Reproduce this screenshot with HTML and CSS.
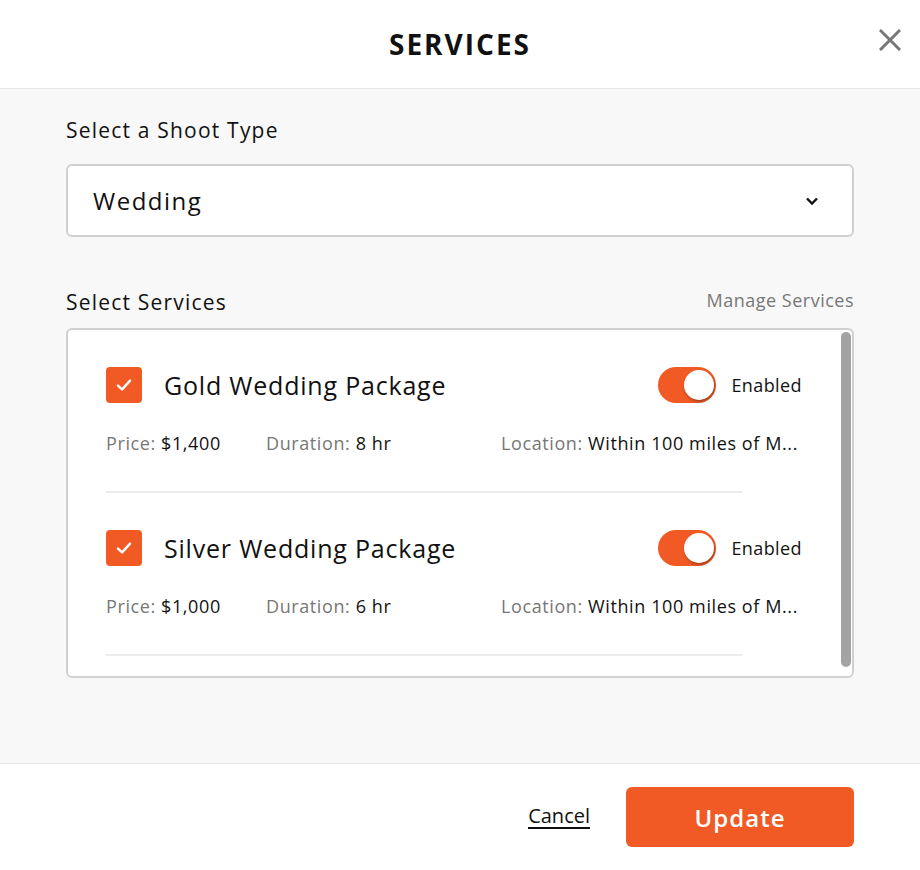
FILE: index.html
```html
<!DOCTYPE html>
<html lang="en">
<head>
    <meta charset="UTF-8">
    <meta name="viewport" content="width=device-width, initial-scale=1.0">
    <title>Services</title>
    <link rel="stylesheet" href="styles.css">
</head>
<body>
    <div class="modal">
        <div class="modal-header">
            <div class="modal-title">SERVICES</div>
            <button class="close" aria-label="Close">
                <svg width="22" height="22" viewBox="0 0 22 22"><path d="M2 2L20 20M20 2L2 20" stroke="#777" stroke-width="3" stroke-linecap="square"/></svg>
            </button>
        </div>

        <div class="modal-body">
            <div class="field-label">Select a Shoot Type</div>
            <div class="select-box">
                <span class="select-value">Wedding</span>
                <svg class="chevron" width="14" height="10" viewBox="0 0 14 10"><path d="M2 2.5L7 7.5L12 2.5" fill="none" stroke="#111" stroke-width="2.4"/></svg>
            </div>

            <div class="services-head">
                <div class="field-label">Select Services</div>
                <a class="manage-link">Manage Services</a>
            </div>
            <div class="services-list">
                <div class="scroll-thumb"></div>
                <!-- пакет 1 -->
                <div class="service">
                    <div class="service-row">
                        <div class="checkbox">
                            <svg width="22" height="22" viewBox="0 0 20 20"><path d="M4.5 10.5L8.3 14L15.5 6" fill="none" stroke="#fff" stroke-width="2.2" stroke-linecap="round" stroke-linejoin="round"/></svg>
                        </div>
                        <div class="service-name">Gold Wedding Package</div>
                        <div class="toggle"><div class="knob"></div></div>
                        <div class="toggle-label">Enabled</div>
                    </div>
                    <div class="service-info">
                        <span class="info-price"><span class="info-key">Price:</span> $1,400</span>
                        <span class="info-duration"><span class="info-key">Duration:</span> 8 hr</span>
                        <span class="info-location"><span class="info-key">Location:</span> Within 100 miles of M...</span>
                    </div>
                    <div class="divider"></div>
                </div>
                <!-- пакет 2 -->
                <div class="service">
                    <div class="service-row">
                        <div class="checkbox">
                            <svg width="22" height="22" viewBox="0 0 20 20"><path d="M4.5 10.5L8.3 14L15.5 6" fill="none" stroke="#fff" stroke-width="2.2" stroke-linecap="round" stroke-linejoin="round"/></svg>
                        </div>
                        <div class="service-name">Silver Wedding Package</div>
                        <div class="toggle"><div class="knob"></div></div>
                        <div class="toggle-label">Enabled</div>
                    </div>
                    <div class="service-info">
                        <span class="info-price"><span class="info-key">Price:</span> $1,000</span>
                        <span class="info-duration"><span class="info-key">Duration:</span> 6 hr</span>
                        <span class="info-location"><span class="info-key">Location:</span> Within 100 miles of M...</span>
                    </div>
                    <div class="divider"></div>
                </div>
            </div>
        </div>

        <div class="modal-footer">
            <a class="cancel-link">Cancel</a>
            <button class="update-button">Update</button>
        </div>
    </div>
</body>
</html>
```

FILE: styles.css
```css
/* общий вид */
body {
    margin: 0;
    padding: 0;
    background-color: #fff;
    font-family: "Open Sans", "Lato", sans-serif;
    color: #111;
}
.modal {
    display: flex;
    flex-direction: column;
    height: 870px;
}

/* шапка */
.modal-header {
    position: relative;
    height: 88px;
    border-bottom: 1px solid #e6e6e6;
    display: flex;
    align-items: center;
    justify-content: center;
}
.modal-title {
    font-size: 28px;
    font-weight: bold;
    letter-spacing: 2px;
}
.close {
    position: absolute;
    right: 19px;
    top: 29px;
    background: none;
    border: none;
    padding: 0;
    cursor: pointer;
}

/* тело */
.modal-body {
    flex: 1;
    background-color: #f8f8f8;
    padding: 0 66px 0 66px;
    border-bottom: 1px solid #e6e6e6;
}
.field-label {
    font-size: 21px;
    letter-spacing: 1.2px;
    color: #111;
    margin-top: 28px;
    line-height: 26px;
}
.select-box {
    margin-top: 21px;
    height: 69px;
    background-color: #fff;
    border: 2px solid #d0d0d0;
    border-radius: 6px;
    display: flex;
    align-items: center;
    justify-content: space-between;
    padding: 0 33px 0 25px;
}
.select-value {
    font-size: 24px;
    letter-spacing: 1.5px;
}
.services-head {
    display: flex;
    justify-content: space-between;
    align-items: flex-end;
    margin-top: 25px;
}
.services-head .field-label {
    margin-top: 27px;
}
.manage-link {
    font-size: 18px;
    letter-spacing: 0.5px;
    color: #777;
    margin-bottom: 3px;
    cursor: pointer;
}
.services-list {
    position: relative;
    margin-top: 13px;
    height: 346px;
    background-color: #fff;
    border: 2px solid #d0d0d0;
    border-radius: 6px;
    overflow: hidden;
}
/* ползунок прокрутки поверх списка */
.scroll-thumb {
    position: absolute;
    right: 1px;
    top: 2px;
    width: 10px;
    height: 335px;
    border-radius: 5px;
    background-color: #a3a3a3;
}

/* пакет услуг */
.service {
    padding: 37px 0 0 38px;
}
.service:first-child {
    padding-top: 40px;
}
.service-row {
    display: flex;
    align-items: center;
    height: 36px;
    padding-right: 50px;
}
.checkbox {
    width: 36px;
    height: 36px;
    border-radius: 4px;
    background-color: #f15a24;
    display: flex;
    align-items: center;
    justify-content: center;
}
.service-name {
    font-size: 25px;
    letter-spacing: 0.8px;
    margin-left: 22px;
}
.toggle {
    margin-left: auto;
    width: 58px;
    height: 36px;
    border-radius: 18px;
    background-color: #f15a24;
    position: relative;
}
.knob {
    position: absolute;
    right: 2px;
    top: 3px;
    width: 30px;
    height: 30px;
    border-radius: 50%;
    background-color: #fff;
    box-shadow: 1px 2px 3px rgba(0,0,0,0.3);
}
.toggle-label {
    font-size: 18px;
    letter-spacing: 0.4px;
    margin-left: 15px;
}
.service-info {
    margin-top: 26px;
    height: 28px;
    line-height: 28px;
    font-size: 18px;
    letter-spacing: 0.6px;
    display: flex;
    white-space: nowrap;
}
.info-key {
    color: #777;
}
.info-price {
    width: 160px;
}
.info-duration {
    width: 235px;
}
.divider {
    margin-top: 34px;
    width: 636px;
    height: 2px;
    background-color: #ececec;
}

/* подвал */
.modal-footer {
    height: 106px;
    display: flex;
    align-items: center;
    justify-content: flex-end;
    padding-right: 66px;
}
.cancel-link {
    font-size: 20px;
    color: #111;
    text-decoration: none;
    border-bottom: 2px solid #111;
    line-height: 22px;
    margin-right: 36px;
    cursor: pointer;
}
.update-button {
    width: 228px;
    height: 60px;
    background-color: #f15a24;
    color: #fff;
    border: none;
    border-radius: 6px;
    font-family: inherit;
    font-size: 24px;
    font-weight: 600;
    letter-spacing: 1px;
    cursor: pointer;
}
```
